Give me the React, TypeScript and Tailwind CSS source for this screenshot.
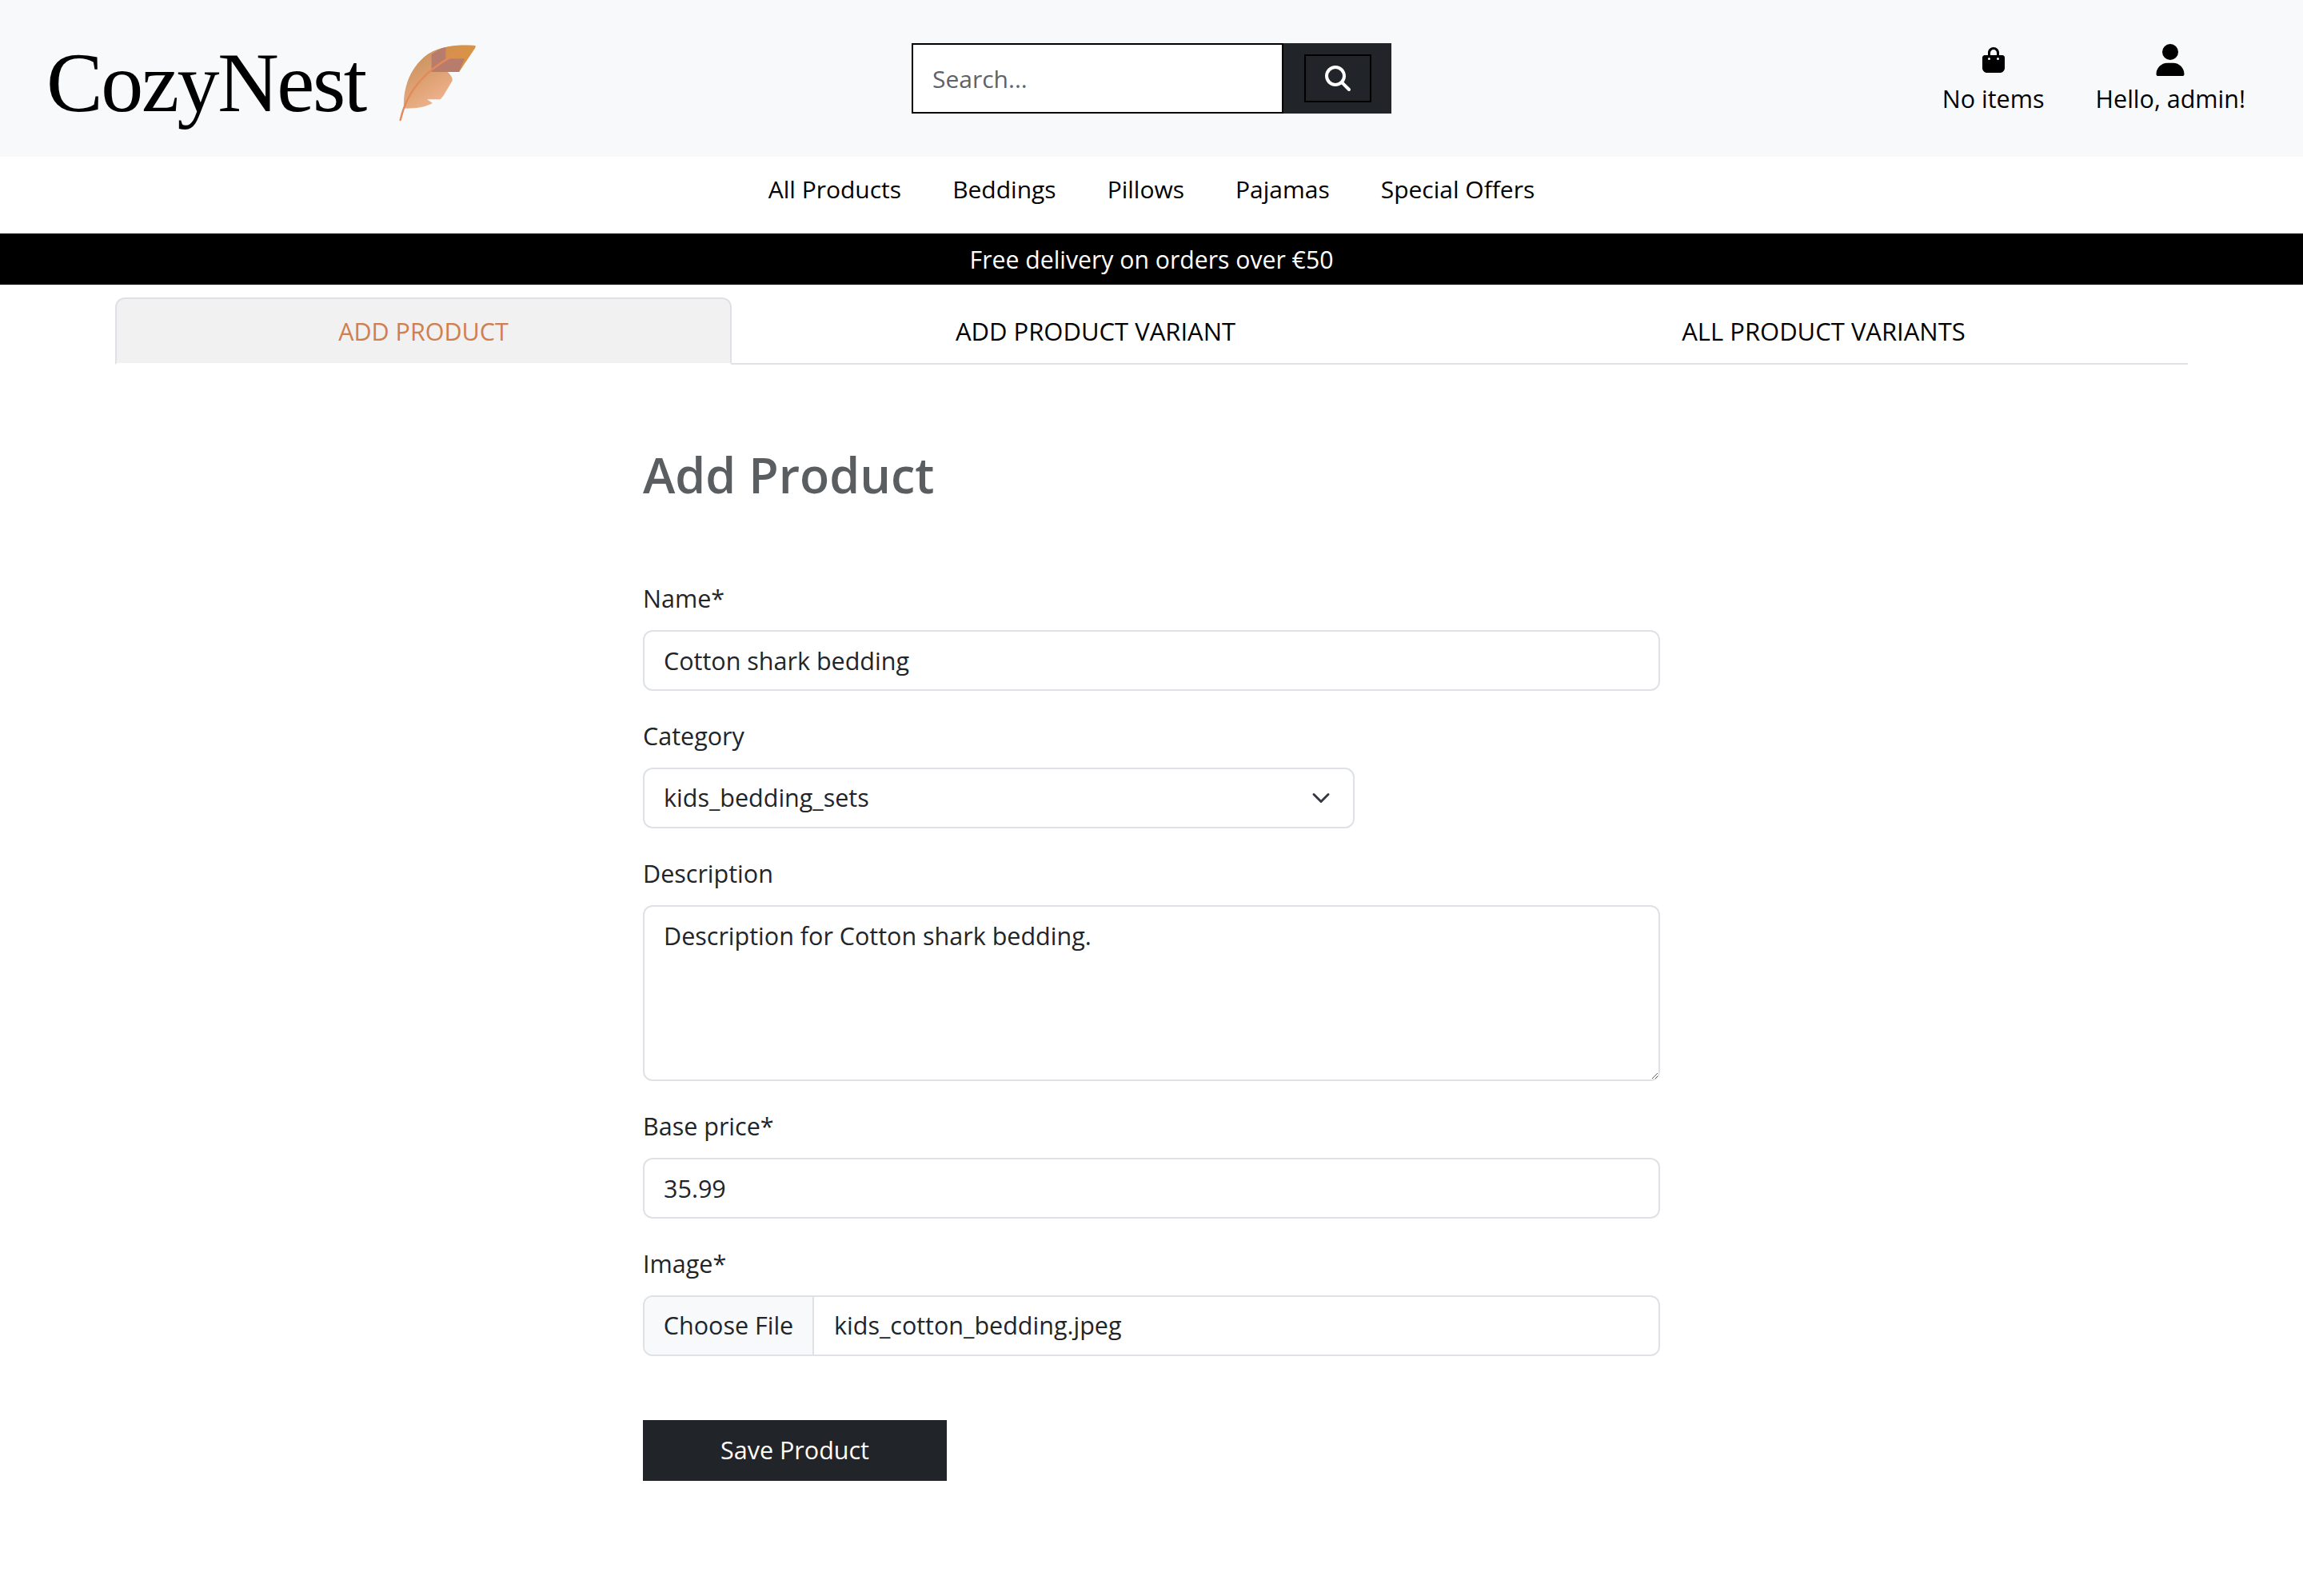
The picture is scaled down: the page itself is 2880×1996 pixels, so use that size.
import { FaBagShopping, FaMagnifyingGlass, FaUser } from "react-icons/fa6";

const navLinks = ["All Products", "Beddings", "Pillows", "Pajamas", "Special Offers"];

const Feather = () => (
  <svg width="120" height="115" viewBox="0 0 360 345" className="ml-[32px]">
    <defs>
      <linearGradient id="leaf" x1="0.15" y1="0.1" x2="0.75" y2="0.95">
        <stop offset="0" stopColor="#c98f5a" />
        <stop offset="0.55" stopColor="#e2a67a" />
        <stop offset="0.8" stopColor="#eeb18c" />
        <stop offset="1" stopColor="#e08f8c" />
      </linearGradient>
      <linearGradient id="tip" x1="0" y1="0" x2="1" y2="0.5">
        <stop offset="0" stopColor="#cf8f52" />
        <stop offset="1" stopColor="#dc9442" />
      </linearGradient>
    </defs>
    <path d="M48 272 C44 205 65 130 125 78 C165 45 225 33 315 36 C320 40 312 50 305 60 L255 135 L210 132 C222 145 232 155 230 168 L196 225 L185 238 L135 238 L156 252 C125 270 85 272 48 272 Z" fill="url(#leaf)" />
    <path d="M205 42 C245 33 285 34 315 36 C320 40 312 50 305 60 L255 135 L205 135 L152 135 L152 70 C168 56 185 47 205 42 Z" fill="url(#tip)" />
    <path d="M152 70 C168 56 185 47 205 42 L205 85 L276 85 L255 135 L152 135 Z" fill="#b87c6c" />
    <path d="M35 315 C58 215 120 125 265 58" fill="none" stroke="#e38a58" strokeWidth="7" strokeLinecap="round" />
  </svg>
);

const labelClass = "block h-[48px] mb-4 leading-[48px]";
const fieldClass = "block w-full h-[76px] border-2 border-[#dee2e6] rounded-[12px] bg-white px-[24px] text-[#212529] outline-none";

const Field = ({ label, children }: { label: string; children: React.ReactNode }) => (
  <div className="mb-8">
    <label className={labelClass}>{label}</label>
    {children}
  </div>
);

export default function App() {
  return (
    <div className="min-h-[1996px] bg-white text-[30.5px] text-[#212529] font-['Open_Sans',sans-serif]">
      <header className="h-[196px] bg-[#f8f9fa] flex items-start justify-between pl-[58px] pr-[72px]">
        <div className="w-[614px] flex items-start pt-[45px]">
          <span className="font-['Liberation_Serif',serif] text-[106px] leading-[118px] tracking-[-2.4px] text-black">CozyNest</span>
          <Feather />
        </div>
        <div className="mt-[54px] flex h-[88px] w-[600px]">
          <input placeholder="Search..." className="w-[465px] border-2 border-black bg-white pl-[24px] text-[30px] outline-none placeholder:text-[#5c636a]" />
          <div className="flex-1 bg-[#212529] flex items-center justify-center">
            <div className="w-[84px] h-[60px] border-2 border-black flex items-center justify-center">
              <FaMagnifyingGlass className="text-white text-[32px]" />
            </div>
          </div>
        </div>
        <div className="w-[600px] flex justify-end gap-[64px] text-black pt-[55px]">
          <div className="flex flex-col items-center">
            <div className="h-[40px] flex items-center"><FaBagShopping className="text-[32px]" /></div>
            <span className="leading-[48px] mt-[4px]">No items</span>
          </div>
          <div className="flex flex-col items-center">
            <FaUser className="text-[40px]" />
            <span className="leading-[48px] mt-[4px]">Hello, admin!</span>
          </div>
        </div>
      </header>

      <nav className="h-[96px] flex justify-center gap-[64px] pt-[17px] text-[30px] leading-[48px] text-black">
        {navLinks.map((link) => (
          <a key={link}>{link}</a>
        ))}
      </nav>

      <div className="h-[64px] bg-black text-white text-[30.2px] pt-[2px] flex items-center justify-center">Free delivery on orders over €50</div>

      <div className="mx-[144px] mt-[16px] flex h-[84px]">
        <div className="w-[771px] pt-[2px] flex items-center justify-center rounded-t-[12px] border-2 border-[#dee2e6] border-b-white bg-[#f1f1f1] text-[#cf7f50]">ADD PRODUCT</div>
        <div className="w-[910px] pt-[2px] flex items-center justify-center border-b-2 border-[#dee2e6] text-[31px] text-black">ADD PRODUCT VARIANT</div>
        <div className="flex-1 pt-[2px] flex items-center justify-center border-b-2 border-[#dee2e6] text-[31px] text-black">ALL PRODUCT VARIANTS</div>
      </div>

      <main className="w-[1272px] ml-[804px] pt-[99px]">
        <h2 className="text-[61px] leading-[77px] font-semibold text-[#5a5e61] mb-[92px]">Add Product</h2>

        <Field label="Name*">
          <input className={fieldClass} defaultValue="Cotton shark bedding" />
        </Field>
        <Field label="Category">
          <div className="relative w-[890px]">
            <select className={`${fieldClass} appearance-none`} defaultValue="kids_bedding_sets">
              <option>kids_bedding_sets</option>
            </select>
            <svg width="24" height="24" viewBox="0 0 16 16" fill="none" stroke="#343a40" strokeWidth="2" strokeLinecap="round" strokeLinejoin="round" className="absolute right-[30px] top-[26px]">
              <path d="m2 5 6 6 6-6" />
            </svg>
          </div>
        </Field>
        <Field label="Description">
          <textarea className="block w-full h-[220px] border-2 border-[#dee2e6] rounded-[12px] px-[24px] pt-[12px] leading-[48px] outline-none" defaultValue="Description for Cotton shark bedding." />
        </Field>
        <Field label="Base price*">
          <input className={fieldClass} defaultValue="35.99" />
        </Field>
        <Field label="Image*">
          <div className="h-[76px] border-2 border-[#dee2e6] rounded-[12px] flex items-center overflow-hidden">
            <div className="h-full w-[212px] bg-[#f8f9fa] border-r-2 border-[#dee2e6] flex items-center justify-center">Choose File</div>
            <span className="pl-[25px]">kids_cotton_bedding.jpeg</span>
          </div>
        </Field>
        <button className="mt-[48px] w-[380px] h-[76px] bg-[#212529] text-white">Save Product</button>
      </main>
    </div>
  );
}
